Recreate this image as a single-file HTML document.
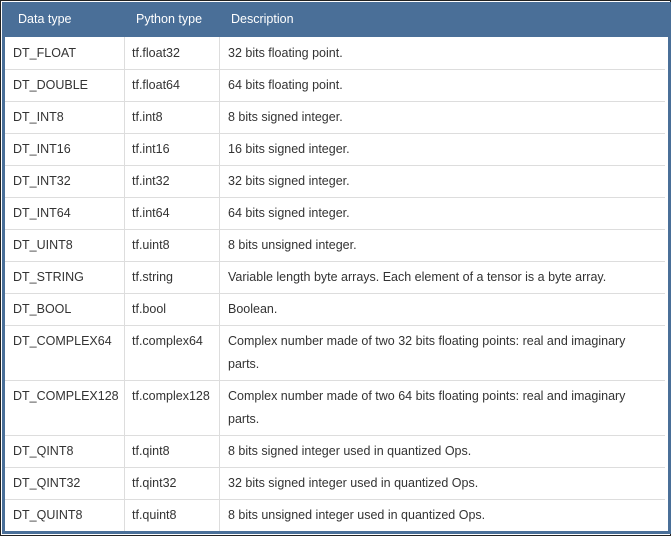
<!DOCTYPE html>
<html><head><style>
html,body{margin:0;padding:0;background:#fff;}
body{width:671px;height:536px;position:relative;overflow:hidden;font-family:"Liberation Sans",sans-serif;font-size:12.5px;color:#333;}
.a{position:absolute;}
.r{position:absolute;left:5px;width:660px;border-top:1px solid #ddd;}
.c{position:absolute;white-space:nowrap;line-height:23px;}
</style></head><body>
<div class="a" style="left:0;top:0;width:669px;height:534px;border:1px solid #222;"></div>
<div class="a" style="left:2px;top:2px;width:663px;height:529px;border:3px solid #4a6f98;border-top:0;"></div>
<div class="a" style="left:2px;top:2px;width:666px;height:35px;background:#4a6f98;"></div>
<div class="c" style="left:18px;top:8px;color:#fff">Data type</div>
<div class="c" style="left:136px;top:8px;color:#fff">Python type</div>
<div class="c" style="left:231px;top:8px;color:#fff">Description</div>
<div class="a" style="left:124px;top:37px;height:494px;border-left:1px solid #ddd"></div>
<div class="a" style="left:219px;top:37px;height:494px;border-left:1px solid #ddd"></div>

<div class="r" style="top:69px"></div><div class="r" style="top:101px"></div><div class="r" style="top:133px"></div>
<div class="r" style="top:165px"></div><div class="r" style="top:197px"></div><div class="r" style="top:229px"></div>
<div class="r" style="top:261px"></div><div class="r" style="top:293px"></div><div class="r" style="top:325px"></div>
<div class="r" style="top:380px"></div><div class="r" style="top:435px"></div><div class="r" style="top:467px"></div>
<div class="r" style="top:499px"></div>

<div class="c" style="left:13px;top:42px">DT_FLOAT</div><div class="c" style="left:132px;top:42px">tf.float32</div><div class="c" style="left:228px;top:42px">32 bits floating point.</div>
<div class="c" style="left:13px;top:74px">DT_DOUBLE</div><div class="c" style="left:132px;top:74px">tf.float64</div><div class="c" style="left:228px;top:74px">64 bits floating point.</div>
<div class="c" style="left:13px;top:106px">DT_INT8</div><div class="c" style="left:132px;top:106px">tf.int8</div><div class="c" style="left:228px;top:106px">8 bits signed integer.</div>
<div class="c" style="left:13px;top:138px">DT_INT16</div><div class="c" style="left:132px;top:138px">tf.int16</div><div class="c" style="left:228px;top:138px">16 bits signed integer.</div>
<div class="c" style="left:13px;top:170px">DT_INT32</div><div class="c" style="left:132px;top:170px">tf.int32</div><div class="c" style="left:228px;top:170px">32 bits signed integer.</div>
<div class="c" style="left:13px;top:202px">DT_INT64</div><div class="c" style="left:132px;top:202px">tf.int64</div><div class="c" style="left:228px;top:202px">64 bits signed integer.</div>
<div class="c" style="left:13px;top:234px">DT_UINT8</div><div class="c" style="left:132px;top:234px">tf.uint8</div><div class="c" style="left:228px;top:234px">8 bits unsigned integer.</div>
<div class="c" style="left:13px;top:266px">DT_STRING</div><div class="c" style="left:132px;top:266px">tf.string</div><div class="c" style="left:228px;top:266px">Variable length byte arrays. Each element of a tensor is a byte array.</div>
<div class="c" style="left:13px;top:298px">DT_BOOL</div><div class="c" style="left:132px;top:298px">tf.bool</div><div class="c" style="left:228px;top:298px">Boolean.</div>
<div class="c" style="left:13px;top:330px">DT_COMPLEX64</div><div class="c" style="left:132px;top:330px">tf.complex64</div><div class="c" style="left:228px;top:330px">Complex number made of two 32 bits floating points: real and imaginary<br>parts.</div>
<div class="c" style="left:13px;top:385px">DT_COMPLEX128</div><div class="c" style="left:132px;top:385px">tf.complex128</div><div class="c" style="left:228px;top:385px">Complex number made of two 64 bits floating points: real and imaginary<br>parts.</div>
<div class="c" style="left:13px;top:440px">DT_QINT8</div><div class="c" style="left:132px;top:440px">tf.qint8</div><div class="c" style="left:228px;top:440px">8 bits signed integer used in quantized Ops.</div>
<div class="c" style="left:13px;top:472px">DT_QINT32</div><div class="c" style="left:132px;top:472px">tf.qint32</div><div class="c" style="left:228px;top:472px">32 bits signed integer used in quantized Ops.</div>
<div class="c" style="left:13px;top:504px">DT_QUINT8</div><div class="c" style="left:132px;top:504px">tf.quint8</div><div class="c" style="left:228px;top:504px">8 bits unsigned integer used in quantized Ops.</div>
</body></html>
